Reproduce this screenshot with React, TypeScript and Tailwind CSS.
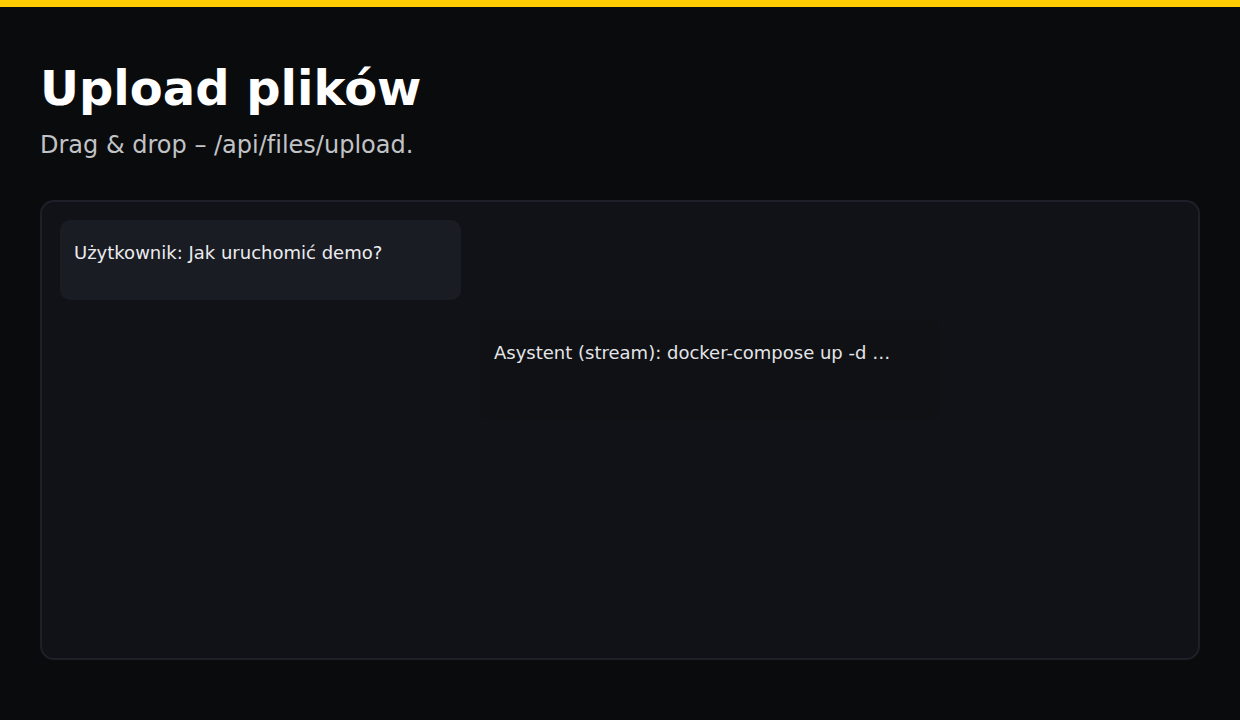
import React from "react";

type Msg = { role: "user" | "assistant"; text: string };

const messages: Msg[] = [
  { role: "user", text: "Użytkownik: Jak uruchomić demo?" },
  { role: "assistant", text: "Asystent (stream): docker-compose up -d …" },
];

export default function App() {
  return (
    <div
      className="min-h-[720px] w-full bg-[#0a0b0d] text-white [font-variant-ligatures:none]"
      style={{ fontFamily: '"DejaVu Sans", "Noto Sans", sans-serif' }}
    >
      <div className="h-[7px] w-full bg-[#ffcc00]" />
      <main className="px-10 pt-[53px]">
        <h1 className="text-[48px] font-bold leading-[1.2] text-white">
          Upload plików
        </h1>
        <p className="mt-[9px] text-[24px] leading-[1.5] text-[#c2c3c6]">
          Drag &amp; drop – /api/files/upload.
        </p>

        <section className="mt-[37px] h-[460px] rounded-[14px] border-2 border-[#1e1f28] bg-[#111217] p-[18px]">
          <div className="flex flex-col gap-5">
            {messages.map((m) =>
              m.role === "user" ? (
                <div
                  key={m.text}
                  className="h-[80px] w-[401px] rounded-[10px] bg-[#1a1c24] px-[14px] pt-[19px] text-[18px] leading-[1.5] text-[#ececee]"
                >
                  {m.text}
                </div>
              ) : (
                <div
                  key={m.text}
                  className="ml-[420px] h-[100px] w-[460px] rounded-[10px] bg-[#0f1115] px-[14px] pt-[19px] text-[18px] leading-[1.5] text-[#e4e5e7]"
                >
                  {m.text}
                </div>
              )
            )}
          </div>
        </section>
      </main>
    </div>
  );
}
